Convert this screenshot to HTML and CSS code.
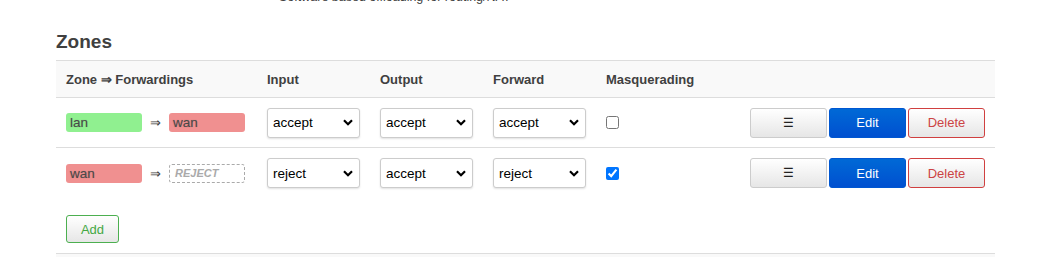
FILE: index.html
```html
<!DOCTYPE html>
<html lang="en">
<head>
    <meta charset="UTF-8">
    <meta name="viewport" content="width=device-width, initial-scale=1.0">
    <title>Firewall - Zone Settings</title>
    <link rel="stylesheet" href="styles.css">
</head>
<body>
    <div class="page">
        <div class="cbi-desc">Software based offloading for routing/NAT</div>

        <h3 class="section-title">Zones</h3>

        <table class="zones">
            <thead>
                <tr>
                    <th class="col-zone">Zone &rArr; Forwardings</th>
                    <th class="col-sel">Input</th>
                    <th class="col-sel">Output</th>
                    <th class="col-sel">Forward</th>
                    <th class="col-masq">Masquerading</th>
                    <th class="col-act"></th>
                </tr>
            </thead>
            <tbody>
                <tr>
                    <td>
                        <div class="fwd">
                            <span class="zonebadge lan">lan</span>
                            <span class="arrow">&rArr;</span>
                            <span class="zonebadge wan">wan</span>
                        </div>
                    </td>
                    <td><select class="cbi-select"><option selected>accept</option><option>reject</option><option>drop</option></select></td>
                    <td><select class="cbi-select"><option selected>accept</option><option>reject</option><option>drop</option></select></td>
                    <td><select class="cbi-select"><option selected>accept</option><option>reject</option><option>drop</option></select></td>
                    <td><input type="checkbox" class="masq"></td>
                    <td class="col-act">
                        <div class="actions">
                            <button class="btn btn-drag">&#9776;</button>
                            <button class="btn btn-edit">Edit</button>
                            <button class="btn btn-delete">Delete</button>
                        </div>
                    </td>
                </tr>
                <tr class="last">
                    <td>
                        <div class="fwd">
                            <span class="zonebadge wan">wan</span>
                            <span class="arrow">&rArr;</span>
                            <span class="zonebadge empty">REJECT</span>
                        </div>
                    </td>
                    <td><select class="cbi-select"><option>accept</option><option selected>reject</option><option>drop</option></select></td>
                    <td><select class="cbi-select"><option selected>accept</option><option>reject</option><option>drop</option></select></td>
                    <td><select class="cbi-select"><option>accept</option><option selected>reject</option><option>drop</option></select></td>
                    <td><input type="checkbox" class="masq" checked></td>
                    <td class="col-act">
                        <div class="actions">
                            <button class="btn btn-drag">&#9776;</button>
                            <button class="btn btn-edit">Edit</button>
                            <button class="btn btn-delete">Delete</button>
                        </div>
                    </td>
                </tr>
            </tbody>
        </table>

        <div class="add-row">
            <button class="btn btn-add">Add</button>
        </div>

        <div class="section-end"></div>
    </div>
</body>
</html>
```

FILE: styles.css
```css
body {
    margin: 0;
    font-family: "Liberation Sans", Arial, sans-serif;
    font-size: 13px;
    color: #404040;
    background: #fff;
}
.page {
    width: 939px;
    margin-left: 56px;
}
.cbi-desc {
    margin-top: -10px;
    padding-left: 223px;
    font-size: 12.5px;
    line-height: 14px;
    color: #404040;
}
.section-title {
    margin: 25px 0 0 0;
    font-size: 19px;
    line-height: 26px;
    font-weight: bold;
    color: #404040;
}
.zones {
    width: 100%;
    margin-top: 5px;
    border-collapse: collapse;
    table-layout: fixed;
}
.zones th {
    background: #f9f9f9;
    border-top: 1px solid #ddd;
    border-bottom: 1px solid #ddd;
    height: 36px;
    padding: 0 10px;
    text-align: left;
    font-weight: bold;
    font-size: 13px;
    color: #404040;
}
.zones td {
    height: 49px;
    padding: 0 10px;
    border-bottom: 1px solid #ddd;
    vertical-align: middle;
}
.zones tr.last td {
    border-bottom: none;
    height: 50px;
}
.col-zone { width: 181px; }
.col-sel { width: 93px; }
.col-masq { width: 120px; }
.col-act { text-align: right; }

.fwd {
    display: flex;
    align-items: center;
}
.zonebadge {
    display: inline-block;
    box-sizing: border-box;
    width: 76px;
    height: 19px;
    line-height: 19px;
    padding: 0 4px;
    border-radius: 3px;
    font-size: 13.5px;
    color: #4a4a4a;
    text-shadow: 0 0 1px rgba(0, 0, 0, 0.25);
}
.lan { background: #90f090; }
.wan { background: #f09090; }
.empty {
    border: 1px dashed #aaa;
    line-height: 17px;
    font-style: italic;
    font-weight: bold;
    font-size: 11px;
    color: #aaa;
    text-shadow: none;
    padding-left: 5px;
}
.arrow {
    width: 27px;
    text-align: center;
    font-size: 13px;
    color: #404040;
}

.cbi-select {
    appearance: none;
    width: 93px;
    height: 30px;
    padding: 0 24px 0 5px;
    border: 1px solid #ccc;
    border-radius: 3px;
    background: #fff url("data:image/svg+xml;utf8,<svg xmlns='http://www.w3.org/2000/svg' width='10' height='7' viewBox='0 0 10 7'><path d='M1 1.2 L5 5.2 L9 1.2' fill='none' stroke='black' stroke-width='2.2'/></svg>") no-repeat right 6px center;
    box-shadow: 0 1px 2px rgba(0, 0, 0, 0.12);
    font-family: "Liberation Sans", Arial, sans-serif;
    font-size: 13.5px;
    color: #000;
}
.masq {
    width: 13px;
    height: 13px;
    margin: 0;
    display: block;
    accent-color: #0075ff;
}

.actions {
    display: flex;
    justify-content: flex-end;
    gap: 2px;
}
.btn {
    box-sizing: border-box;
    height: 30px;
    width: 77px;
    border: 1px solid #ccc;
    border-radius: 3px;
    background: linear-gradient(#fff, #e6e6e6);
    font-family: "Liberation Sans", Arial, sans-serif;
    font-size: 13px;
    color: #333;
    cursor: pointer;
    padding: 0;
}
.btn-drag { font-size: 12px; color: #222; }
.btn-edit {
    background: linear-gradient(#0069d6, #0050d0);
    border-color: #0057d2;
    color: #fff;
}
.btn-delete {
    border-color: #d04040;
    color: #c44;
}
.add-row {
    padding: 17px 10px 0;
}
.btn-add {
    width: 53px;
    height: 28px;
    border-color: #4caf50;
    color: #44a844;
}
.section-end {
    margin-top: 10px;
    border-top: 1px solid #ddd;
    height: 4px;
    background: #f9f9f9;
}
```
